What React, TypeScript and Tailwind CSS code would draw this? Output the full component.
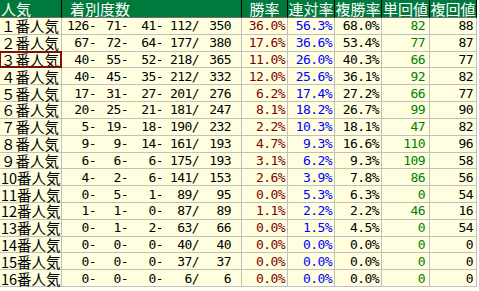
import React from "react";

type Row = {
  label: string;
  f: [string, string, string, string, string];
  win: string;
  ren: string;
  fuku: string;
  tan: string;
  fk: string;
};

const rows: Row[] = [
  { label: "１番人気", f: ["126-", "71-", "41-", "112/", "350"], win: "36.0%", ren: "56.3%", fuku: "68.0%", tan: "82", fk: "88" },
  { label: "２番人気", f: ["67-", "72-", "64-", "177/", "380"], win: "17.6%", ren: "36.6%", fuku: "53.4%", tan: "77", fk: "87" },
  { label: "３番人気", f: ["40-", "55-", "52-", "218/", "365"], win: "11.0%", ren: "26.0%", fuku: "40.3%", tan: "66", fk: "77" },
  { label: "４番人気", f: ["40-", "45-", "35-", "212/", "332"], win: "12.0%", ren: "25.6%", fuku: "36.1%", tan: "92", fk: "82" },
  { label: "５番人気", f: ["17-", "31-", "27-", "201/", "276"], win: "6.2%", ren: "17.4%", fuku: "27.2%", tan: "66", fk: "77" },
  { label: "６番人気", f: ["20-", "25-", "21-", "181/", "247"], win: "8.1%", ren: "18.2%", fuku: "26.7%", tan: "99", fk: "90" },
  { label: "７番人気", f: ["5-", "19-", "18-", "190/", "232"], win: "2.2%", ren: "10.3%", fuku: "18.1%", tan: "47", fk: "82" },
  { label: "８番人気", f: ["9-", "9-", "14-", "161/", "193"], win: "4.7%", ren: "9.3%", fuku: "16.6%", tan: "110", fk: "96" },
  { label: "９番人気", f: ["6-", "6-", "6-", "175/", "193"], win: "3.1%", ren: "6.2%", fuku: "9.3%", tan: "109", fk: "58" },
  { label: "10番人気", f: ["4-", "2-", "6-", "141/", "153"], win: "2.6%", ren: "3.9%", fuku: "7.8%", tan: "86", fk: "56" },
  { label: "11番人気", f: ["0-", "5-", "1-", "89/", "95"], win: "0.0%", ren: "5.3%", fuku: "6.3%", tan: "0", fk: "54" },
  { label: "12番人気", f: ["1-", "1-", "0-", "87/", "89"], win: "1.1%", ren: "2.2%", fuku: "2.2%", tan: "46", fk: "16" },
  { label: "13番人気", f: ["0-", "1-", "2-", "63/", "66"], win: "0.0%", ren: "1.5%", fuku: "4.5%", tan: "0", fk: "54" },
  { label: "14番人気", f: ["0-", "0-", "0-", "40/", "40"], win: "0.0%", ren: "0.0%", fuku: "0.0%", tan: "0", fk: "0" },
  { label: "15番人気", f: ["0-", "0-", "0-", "37/", "37"], win: "0.0%", ren: "0.0%", fuku: "0.0%", tan: "0", fk: "0" },
  { label: "16番人気", f: ["0-", "0-", "0-", "6/", "6"], win: "0.0%", ren: "0.0%", fuku: "0.0%", tan: "0", fk: "0" },
];

const jp = "font-['Noto_Sans_CJK_JP',sans-serif]";
const mono = "font-['DejaVu_Sans_Mono',monospace] text-[13px] tracking-[-0.6px]";

const hcell =
  "h-[18px] bg-[#007a3c] border-r border-r-black border-b border-b-[#707070] text-white text-[15px] leading-[17px] flex items-center whitespace-nowrap";
const bcell =
  "h-[16.8125px] bg-[#ffffe0] border-r border-b border-[#c0c0c0] flex items-center leading-[15px] whitespace-nowrap";

export default function App() {
  return (
    <div className="w-[479px] h-[291px] bg-white">
      <div className={`grid grid-cols-[62px_180px_46px_47px_47px_48px_47px] w-[477px] ${jp}`}>
        <div className={`${hcell} pl-[1px]`}>人気</div>
        <div className={`${hcell} pl-[8px]`}>着別度数</div>
        <div className={`${hcell} justify-center`}>勝率</div>
        <div className={`${hcell} justify-center`}>連対率</div>
        <div className={`${hcell} justify-center`}>複勝率</div>
        <div className={`${hcell} justify-center`}>単回値</div>
        <div className={`${hcell} justify-center`}>複回値</div>
        {rows.map((r, i) => (
          <React.Fragment key={i}>
            <div className={`${bcell} relative text-[14.5px] pl-[1px] text-black`}>
              {r.label}
              {i === 2 && (
                <div className="absolute inset-[-1px] border-2 border-[#7a1010] pointer-events-none" />
              )}
            </div>
            <div className={`${bcell} ${mono} text-black`}>
              <div className="grid grid-cols-[34px_32px_35px_36px_32px] w-full">
                {r.f.map((v, j) => (
                  <span key={j} className="text-right whitespace-pre">
                    {v}
                  </span>
                ))}
              </div>
            </div>
            <div className={`${bcell} ${mono} justify-end pr-[2px] text-[#800000]`}>{r.win}</div>
            <div className={`${bcell} ${mono} justify-end pr-[2px] text-[#0000ff]`}>{r.ren}</div>
            <div className={`${bcell} ${mono} justify-end pr-[2px] text-black`}>{r.fuku}</div>
            <div className={`${bcell} ${mono} justify-end pr-[4px] text-[#008000]`}>{r.tan}</div>
            <div className={`${bcell} ${mono} justify-end pr-[3px] text-black`}>{r.fk}</div>
          </React.Fragment>
        ))}
      </div>
    </div>
  );
}
